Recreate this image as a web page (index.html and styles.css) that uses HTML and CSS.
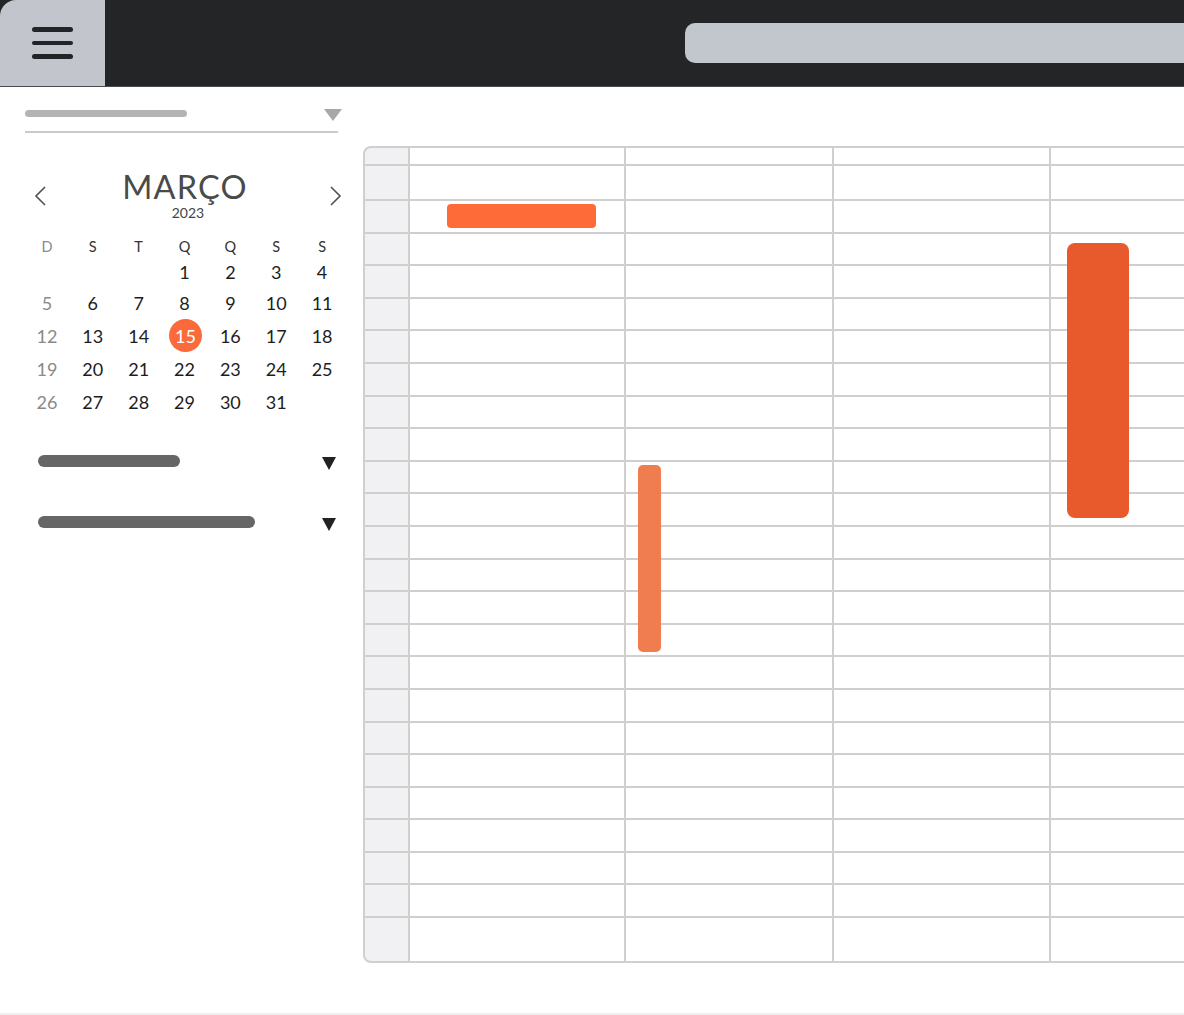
FILE: index.html
```html
<!DOCTYPE html>
<html lang="pt">
<head>
<meta charset="utf-8">
<title>Calendário</title>
<link rel="stylesheet" href="styles.css">
</head>
<body>
<div class="app">
  <header class="topbar">
    <button class="menu-btn" aria-label="Menu">
      <span class="line"></span><span class="line"></span><span class="line"></span>
    </button>
    <div class="search"></div>
  </header>
  <div class="main">
    <aside class="sidebar">
      <div class="dropdown">
        <span class="ph-bar"></span>
        <span class="tri tri-light"></span>
      </div>
      <div class="calendar">
        <div class="cal-head">
          <svg class="chev" width="12" height="20" viewBox="0 0 12 20"><path d="M11 1 L2 10 L11 19" fill="none" stroke="#505050" stroke-width="1.6"/></svg>
          <div class="cal-title">
            <span class="month">MARÇO</span>
            <span class="year">2023</span>
          </div>
          <svg class="chev" width="12" height="20" viewBox="0 0 12 20"><path d="M1 1 L10 10 L1 19" fill="none" stroke="#505050" stroke-width="1.6"/></svg>
        </div>
        <div class="cal-grid">
          <span class="wd sun">D</span><span class="wd">S</span><span class="wd">T</span><span class="wd">Q</span><span class="wd">Q</span><span class="wd">S</span><span class="wd">S</span>
          <span></span><span></span><span></span><span class="d">1</span><span class="d">2</span><span class="d">3</span><span class="d">4</span>
          <span class="d sun">5</span><span class="d">6</span><span class="d">7</span><span class="d">8</span><span class="d">9</span><span class="d">10</span><span class="d">11</span>
          <span class="d sun">12</span><span class="d">13</span><span class="d">14</span><span class="d"><span class="today">15</span></span><span class="d">16</span><span class="d">17</span><span class="d">18</span>
          <span class="d sun">19</span><span class="d">20</span><span class="d">21</span><span class="d">22</span><span class="d">23</span><span class="d">24</span><span class="d">25</span>
          <span class="d sun">26</span><span class="d">27</span><span class="d">28</span><span class="d">29</span><span class="d">30</span><span class="d">31</span><span></span>
        </div>
      </div>
      <div class="filter first">
        <span class="f-bar short"></span>
        <span class="tri tri-dark"></span>
      </div>
      <div class="filter second">
        <span class="f-bar long"></span>
        <span class="tri tri-dark"></span>
      </div>
    </aside>
    <section class="board">
      <div class="row head"><span class="g"></span><span></span><span></span><span></span><span></span></div>
      <div class="row top"><span class="g"></span><span></span><span></span><span></span><span></span></div>
      <div class="row"><span class="g"></span><span></span><span></span><span></span><span></span></div>
      <div class="row"><span class="g"></span><span></span><span></span><span></span><span></span></div>
      <div class="row"><span class="g"></span><span></span><span></span><span></span><span></span></div>
      <div class="row"><span class="g"></span><span></span><span></span><span></span><span></span></div>
      <div class="row"><span class="g"></span><span></span><span></span><span></span><span></span></div>
      <div class="row"><span class="g"></span><span></span><span></span><span></span><span></span></div>
      <div class="row"><span class="g"></span><span></span><span></span><span></span><span></span></div>
      <div class="row"><span class="g"></span><span></span><span></span><span></span><span></span></div>
      <div class="row"><span class="g"></span><span></span><span></span><span></span><span></span></div>
      <div class="row"><span class="g"></span><span></span><span></span><span></span><span></span></div>
      <div class="row"><span class="g"></span><span></span><span></span><span></span><span></span></div>
      <div class="row"><span class="g"></span><span></span><span></span><span></span><span></span></div>
      <div class="row"><span class="g"></span><span></span><span></span><span></span><span></span></div>
      <div class="row"><span class="g"></span><span></span><span></span><span></span><span></span></div>
      <div class="row"><span class="g"></span><span></span><span></span><span></span><span></span></div>
      <div class="row"><span class="g"></span><span></span><span></span><span></span><span></span></div>
      <div class="row"><span class="g"></span><span></span><span></span><span></span><span></span></div>
      <div class="row"><span class="g"></span><span></span><span></span><span></span><span></span></div>
      <div class="row"><span class="g"></span><span></span><span></span><span></span><span></span></div>
      <div class="row"><span class="g"></span><span></span><span></span><span></span><span></span></div>
      <div class="row"><span class="g"></span><span></span><span></span><span></span><span></span></div>
      <div class="row"><span class="g"></span><span></span><span></span><span></span><span></span></div>
      <div class="row last"><span class="g"></span><span></span><span></span><span></span><span></span></div>
      <div class="event ev1"></div>
      <div class="event ev2"></div>
      <div class="event ev3"></div>
    </section>
  </div>
</div>
</body>
</html>
```

FILE: styles.css
```css
* { box-sizing: border-box; }

html, body {
  margin: 0;
  padding: 0;
  background: #ffffff;
  font-family: "Lato", "Liberation Sans", sans-serif;
}

body {
  width: 1184px;
  height: 1015px;
  overflow: hidden;
}

.app {
  height: 1015px;
  display: flex;
  flex-direction: column;
  border-bottom: 2px solid #efefef;
  overflow: hidden;
}

/* ---------- top bar ---------- */
.topbar {
  height: 87px;
  flex: none;
  display: flex;
  align-items: center;
  background: #242527;
  border-bottom: 1px solid #4b4c4f;
}

.menu-btn {
  width: 105px;
  height: 86px;
  align-self: flex-start;
  border: 0;
  padding: 0;
  margin: 0;
  background: #c2c5cb;
  border-top-left-radius: 16px;
  display: flex;
  flex-direction: column;
  align-items: center;
  justify-content: center;
  gap: 9px;
}

.menu-btn .line {
  display: block;
  width: 41px;
  height: 4.4px;
  border-radius: 3px;
  background: #222428;
}

.search {
  flex: 1;
  height: 40px;
  margin-left: 580px;
  margin-right: -20px;
  background: #c2c6cd;
  border-radius: 10px;
}

/* ---------- main ---------- */
.main {
  flex: 1;
  display: flex;
  align-items: flex-start;
}

.sidebar {
  width: 363px;
  flex: none;
}

.dropdown {
  margin: 0 0 0 25px;
  width: 313px;
  padding-top: 21px;
  padding-bottom: 10px;
  display: flex;
  justify-content: space-between;
  align-items: flex-start;
  border-bottom: 2px solid #cacaca;
}

.ph-bar {
  display: block;
  width: 162px;
  height: 7px;
  margin-top: 2px;
  border-radius: 4px;
  background: #b4b4b4;
}

.tri {
  display: block;
  width: 0;
  height: 0;
}

.tri-light {
  margin-top: 1px;
  margin-right: -4px;
  border-left: 9.5px solid transparent;
  border-right: 9.5px solid transparent;
  border-top: 12.6px solid #a8a8a8;
}

.tri-dark {
  margin-top: 2px;
  border-left: 7.5px solid transparent;
  border-right: 7.5px solid transparent;
  border-top: 13px solid #222222;
}

/* ---------- calendar ---------- */
.calendar {
  margin-left: 24px;
  width: 321px;
}

.cal-head {
  margin-top: 38px;
  padding: 0 3px 0 10px;
  display: flex;
  align-items: center;
  justify-content: space-between;
}

.chev { display: block; }

.cal-title {
  display: flex;
  flex-direction: column;
  align-items: center;
  color: #4a4a4a;
}

.month {
  margin-right: 6px;
  font-size: 32.5px;
  line-height: 32px;
  font-weight: 400;
  letter-spacing: 1.2px;
  color: #4a4a4a;
}

.year {
  margin-top: 3px;
  font-size: 14px;
  line-height: 14px;
  color: #444444;
}

.cal-grid {
  margin-top: 16px;
  display: grid;
  grid-template-columns: repeat(7, 1fr);
  grid-template-rows: 20px 32px 29px 37px 29px 37px;
}

.cal-grid > span {
  display: flex;
  align-items: center;
  justify-content: center;
}

.wd {
  font-size: 14.5px;
  color: #333333;
}

.d {
  font-size: 18px;
  color: #1d1d1d;
}

.sun { color: #8a8a8a; }

.today {
  width: 33px;
  height: 33px;
  border-radius: 50%;
  background: #fa6a3a;
  color: #ffffff;
  display: flex;
  align-items: center;
  justify-content: center;
  margin-left: 2px;
}

.filter {
  margin-left: 38px;
  width: 298px;
  display: flex;
  justify-content: space-between;
  align-items: flex-start;
}

.filter.first { margin-top: 34.6px; }
.filter.second { margin-top: 46.4px; }

.f-bar {
  display: block;
  height: 12px;
  border-radius: 6px;
  background: #666666;
}

.f-bar.short { width: 142px; }
.f-bar.long { width: 217px; }

/* ---------- board ---------- */
.board {
  position: relative;
  margin-top: 59px;
  flex: none;
  display: flex;
  flex-direction: column;
  gap: 2px;
  padding: 2px;
  background: #cfcfcf;
  border-radius: 8px 0 0 8px;
}

.row {
  display: grid;
  grid-template-columns: 43px 214px 206px 215px 214px;
  gap: 2px;
  height: 30.6px;
}

.row.head { height: 16px; }
.row.top { height: 33px; }
.row.last { height: 43px; }

.row > span {
  display: block;
  background: #ffffff;
}

.row > span.g { background: #f1f1f3; }

.row.head > span.g { border-top-left-radius: 6px; }
.row.last > span.g { border-bottom-left-radius: 6px; }

.event {
  position: absolute;
}

.ev1 {
  left: 83.7px;
  top: 58px;
  width: 149px;
  height: 24px;
  border-radius: 4px;
  background: #fe6b39;
}

.ev2 {
  left: 275.3px;
  top: 319px;
  width: 22.4px;
  height: 187px;
  border-radius: 5px;
  background: #ef7d50;
}

.ev3 {
  left: 703.7px;
  top: 97.3px;
  width: 62.6px;
  height: 275px;
  border-radius: 8px;
  background: #e85a2b;
}
```
